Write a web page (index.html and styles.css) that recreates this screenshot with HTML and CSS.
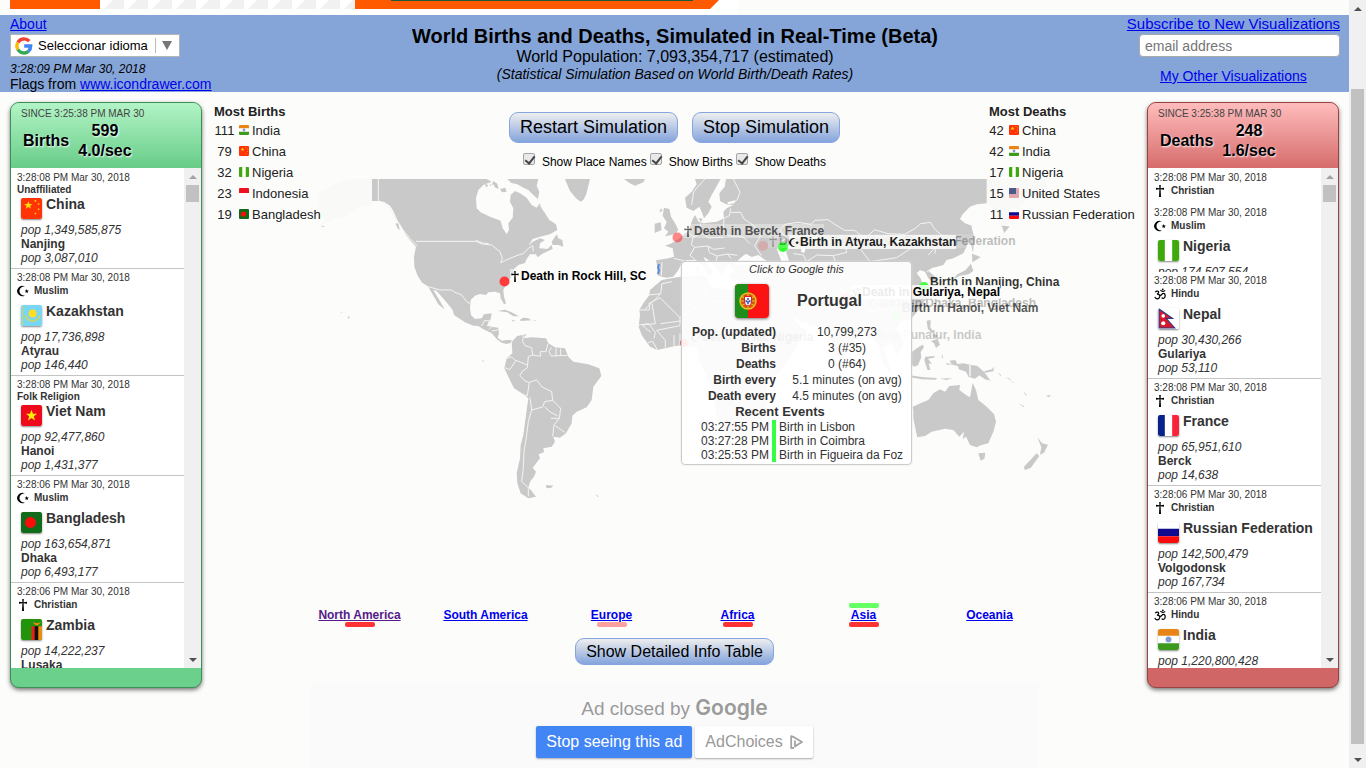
FILE: index.html
```html
<!DOCTYPE html>
<html lang="en">
<head>
<meta charset="utf-8">
<title>World Births and Deaths, Simulated in Real-Time (Beta)</title>
<link rel="stylesheet" href="styles.css">
</head>
<body>
<svg class="defs" aria-hidden="true">
  <symbol id="f-cn" viewBox="0 0 20 20" preserveAspectRatio="none"><path fill="#ff3306" d="M0 0h20v20H0z"/><path fill="#ffde00" d="M7 3l1.100 2.600 2.800.2-2.200 1.700.8 2.700L7 8.600l-2.500 1.600.8-2.700-2.200-1.700 2.800-.2zM13 2h1.500v1.500H13zM16 5h1.500v1.500H16zM16 10h1.500v1.500H16zM13 14h1.500v1.500H13z"/></symbol>
  <symbol id="f-in" viewBox="0 0 20 20" preserveAspectRatio="none"><path fill="#fff" d="M0 0h20v20H0z"/><path fill="#e98416" d="M0 0h20v6.500H0z"/><path fill="#3c9a1d" d="M0 13.500h20V20H0z"/><circle cx="10" cy="10" r="2.800" fill="#7f9bd1"/></symbol>
  <symbol id="f-ng" viewBox="0 0 20 20" preserveAspectRatio="none"><path fill="#fff" d="M0 0h20v20H0z"/><path fill="#3ea80d" d="M0 0h6.500v20H0zM13.500 0H20v20h-6.500z"/></symbol>
  <symbol id="f-id" viewBox="0 0 20 20" preserveAspectRatio="none"><path fill="#fff" d="M0 0h20v20H0z"/><path fill="#ee1122" d="M0 0h20v10H0z"/></symbol>
  <symbol id="f-bd" viewBox="0 0 20 20" preserveAspectRatio="none"><path fill="#126b1b" d="M0 0h20v20H0z"/><circle cx="9" cy="10" r="5.200" fill="#ff0b0b"/></symbol>
  <symbol id="f-us" viewBox="0 0 20 20" preserveAspectRatio="none"><path fill="#f3dada" d="M0 0h20v20H0z"/><path fill="#cc7780" d="M0 1h20v2H0zM0 5h20v2H0zM0 9h20v2H0zM0 13h20v2H0zM0 17h20v2H0z"/><path fill="#4c5b8e" d="M0 0h14v12H0z"/></symbol>
  <symbol id="f-ru" viewBox="0 0 20 20" preserveAspectRatio="none"><path fill="#fff" d="M0 0h20v20H0z"/><path fill="#0d0a8f" d="M0 6.500h20v7H0z"/><path fill="#fa0a0a" d="M0 13.500h20V20H0z"/></symbol>
  <symbol id="f-kz" viewBox="0 0 20 20" preserveAspectRatio="none"><path fill="#79d7f5" d="M0 0h20v20H0z"/><path fill="#c9d86a" d="M1 1h1v18H1z"/><circle cx="11" cy="8" r="3.800" fill="#ffdd22"/><path d="M4 10q2 5 7 5t7-5" fill="none" stroke="#d3d556" stroke-width="1.500"/></symbol>
  <symbol id="f-vn" viewBox="0 0 20 20" preserveAspectRatio="none"><path fill="#ee0a1b" d="M0 0h20v20H0z"/><path fill="#ffee00" d="M10 4.500l1.400 3.800h4l-3.200 2.500 1.200 3.900L10 12.400l-3.400 2.300 1.200-3.900-3.200-2.500h4z"/></symbol>
  <symbol id="f-zm" viewBox="0 0 20 20" preserveAspectRatio="none"><path fill="#23930b" d="M0 0h20v20H0z"/><path fill="#e5221a" d="M10 7h3.500v13H10z"/><path fill="#111" d="M13 7h4v13h-4z"/><path fill="#ee8b12" d="M16.500 7H20v13h-3.500zM11 3l4 1 4-1-3 3h-2z"/></symbol>
  <symbol id="f-np" viewBox="0 0 20 20" preserveAspectRatio="none"><path fill="#fff" d="M0 0h20v20H0z"/><path fill="#d5182c" stroke="#273a8c" d="M1 1l13 9H8l8 9H1z"/><circle cx="5" cy="7.500" r="1.700" fill="#fff"/><circle cx="5" cy="14.500" r="2" fill="#fff"/></symbol>
  <symbol id="f-fr" viewBox="0 0 20 20" preserveAspectRatio="none"><path fill="#fff" d="M0 0h20v20H0z"/><path fill="#08228c" d="M0 0h6.500v20H0z"/><path fill="#f9233a" d="M13.500 0H20v20h-6.500z"/></symbol>
  <symbol id="f-pt" viewBox="0 0 34 34"><path fill="#fb1212" d="M0 0h34v34H0z"/><path fill="#1f8d1a" d="M0 0h13v34H0z"/><circle cx="13" cy="17" r="8" fill="#d8551a" stroke="#e4c21c" stroke-width="1.500"/><path d="M5 17h16M13 9v16M6 12q7 5 14 0M6 22q7-5 14 0" stroke="#e4c21c" stroke-width="1.200" fill="none"/><path fill="#fff" stroke="#e02020" d="M9.500 12.500h7V18q0 3.500-3.500 4-3.500-.5-3.500-4z"/><path fill="#3451b5" d="M12.200 14h1.600v2h-1.600zM10.500 16.200h1.500v2h-1.500zM14 16.200h1.500v2H14zM12.200 16.800h1.600v3.400h-1.600z"/></symbol>
  <symbol id="cross" viewBox="0 0 10 12"><path d="M4.200 0h1.600l-.2 3.200 3.400-.4v1.900l-3.400-.4.4 7.700H4l.4-7.700-3.400.4V2.800l3.400.4z"/></symbol>
  <symbol id="moon" viewBox="0 0 12 12"><path d="M8 1.500A5.200 5.200 0 1 0 8 10.500 4.600 4.600 0 1 1 8 1.500zM9.700 4l.6 1.400 1.600.1-1.200 1 .4 1.500-1.400-.8-1.300.8.4-1.500-1.200-1 1.500-.1z"/></symbol>
  <symbol id="om" viewBox="0 0 12 12"><path d="M1.200 4.200Q2.500 2.600 4.200 3.200 5.600 4.600 3 6.200 6 6 5.800 8.600 5.200 11 3 10.800 1.200 10.300.8 8.800M5.400 7.200Q7 7.600 7.800 6.400 9.400 4.600 10.800 6 11.600 8 10.600 9.600 9.200 11 7.600 9.800M6.400 2.200Q8.600 4.600 11.200 2.400" fill="none" stroke="#000" stroke-width="1.200"/><circle cx="8.800" cy="1.300" r=".9"/></symbol>
</svg>

<div class="page">
  <div class="banner" aria-hidden="true">
    <svg width="738" height="15" viewBox="0 0 738 15">
      <defs><pattern id="slant" x="104" width="24" height="9" patternUnits="userSpaceOnUse"><path fill="#f1f1f1" d="M0 9l9-9h11v9z"/></pattern></defs>
      <path fill="#fff" d="M10 0h728v15H10z"/>
      <path fill="url(#slant)" d="M100 0h255v9H100z"/>
      <path fill="#ff5a00" d="M10 0h90v9H10zM355 0h364l-9 9H355z"/>
      <path fill="#1d5a3c" d="M391 0h302v1H391z"/>
    </svg>
  </div>

  <header class="header">
    <div class="head-left">
      <a href="#about">About</a>
      <button class="lang" type="button" aria-haspopup="listbox">
        <svg width="18" height="18" viewBox="0 0 18 18" fill="none" stroke-width="3.400"><path stroke="#ea4335" d="M2.900 5.500A7 7 0 0 1 14.200 4.200"/><path stroke="#fbbc05" d="M2.900 5.500a7 7 0 0 0 0 7"/><path stroke="#34a853" d="M2.900 12.500a7 7 0 0 0 10.700 1.800"/><path stroke="#4285f4" d="M9.200 9h6.500a7 7 0 0 1-2.300 5.300"/></svg>
        <span>Seleccionar idioma</span><i class="lang-arrow"></i>
      </button>
      <time class="clock">3:28:09 PM Mar 30, 2018</time>
      <p class="credit">Flags from <a href="#flags">www.icondrawer.com</a></p>
    </div>
    <div class="head-mid">
      <h1>World Births and Deaths, Simulated in Real-Time (Beta)</h1>
      <p>World Population: 7,093,354,717 (estimated)</p>
      <p class="note">(Statistical Simulation Based on World Birth/Death Rates)</p>
    </div>
    <form class="head-right">
      <label for="email"><a href="#subscribe">Subscribe to New Visualizations</a></label>
      <input id="email" type="email" placeholder="email address">
      <a class="other" href="#other">My Other Visualizations</a>
    </form>
  </header>

  <main class="main">
    <section class="panel births">
      <div class="panel-head">
        <p class="since">SINCE 3:25:38 PM MAR 30</p>
        <div class="totals"><h2>Births</h2><p>599<br>4.0/sec</p></div>
      </div>
      <div class="feed">
        <ul class="entries">
          <li><time>3:28:08 PM Mar 30, 2018</time><p class="rel">Unaffiliated</p><div class="country"><svg class="flag"><use href="#f-cn"/></svg><h3>China</h3></div><p class="pop">pop 1,349,585,875</p><p class="city">Nanjing</p><p class="pop">pop 3,087,010</p></li>
          <li><time>3:28:08 PM Mar 30, 2018</time><p class="rel iconed"><svg><use href="#moon"/></svg>Muslim</p><div class="country"><svg class="flag"><use href="#f-kz"/></svg><h3>Kazakhstan</h3></div><p class="pop">pop 17,736,898</p><p class="city">Atyrau</p><p class="pop">pop 146,440</p></li>
          <li><time>3:28:08 PM Mar 30, 2018</time><p class="rel">Folk Religion</p><div class="country"><svg class="flag"><use href="#f-vn"/></svg><h3>Viet Nam</h3></div><p class="pop">pop 92,477,860</p><p class="city">Hanoi</p><p class="pop">pop 1,431,377</p></li>
          <li><time>3:28:06 PM Mar 30, 2018</time><p class="rel iconed"><svg><use href="#moon"/></svg>Muslim</p><div class="country"><svg class="flag"><use href="#f-bd"/></svg><h3>Bangladesh</h3></div><p class="pop">pop 163,654,871</p><p class="city">Dhaka</p><p class="pop">pop 6,493,177</p></li>
          <li><time>3:28:06 PM Mar 30, 2018</time><p class="rel iconed"><svg><use href="#cross"/></svg>Christian</p><div class="country"><svg class="flag"><use href="#f-zm"/></svg><h3>Zambia</h3></div><p class="pop">pop 14,222,237</p><p class="city">Lusaka</p></li>
        </ul>
        <div class="scroll feed-scroll" aria-hidden="true"><i class="up dim"></i><i class="thumb"></i><i></i><i class="down"></i></div>
      </div>
    </section>

    <section class="center">
      <div class="top-list">
        <h2>Most Births</h2>
        <ol>
          <li><b>111</b><svg><use href="#f-in"/></svg>India</li>
          <li><b>79</b><svg><use href="#f-cn"/></svg>China</li>
          <li><b>32</b><svg><use href="#f-ng"/></svg>Nigeria</li>
          <li><b>23</b><svg><use href="#f-id"/></svg>Indonesia</li>
          <li><b>19</b><svg><use href="#f-bd"/></svg>Bangladesh</li>
        </ol>
      </div>
      <div class="controls">
        <div class="buttons"><button class="btn large" type="button">Restart Simulation</button><button class="btn large" type="button">Stop Simulation</button></div>
        <div class="checks">
          <label><input type="checkbox" checked>Show Place Names</label>
          <label><input type="checkbox" checked>Show Births</label>
          <label><input type="checkbox" checked>Show Deaths</label>
        </div>
      </div>
      <div class="top-list right">
        <h2>Most Deaths</h2>
        <ol>
          <li><b>42</b><svg><use href="#f-cn"/></svg>China</li>
          <li><b>42</b><svg><use href="#f-in"/></svg>India</li>
          <li><b>17</b><svg><use href="#f-ng"/></svg>Nigeria</li>
          <li><b>15</b><svg><use href="#f-us"/></svg>United States</li>
          <li><b>11</b><svg><use href="#f-ru"/></svg>Russian Federation</li>
        </ol>
      </div>

      <div class="map">
        <svg class="world" viewBox="294 179 761 424">
          <g fill="#f9f9f8">
            <path d="M318 192l18-8 12-5h24v26l-14 2-12 8-16 6-12 6 8-8-10-6 4-10z"/>
            <path d="M987 179h60v12l-20 8-14 14-10 22-4-14-6-14-6-4z"/>
          </g>
          <g transform="translate(310 175) scale(.33333)" fill="#c9c9c9">
            <path d="M186 12H530L545 20 520 30 505 45 498 70 500 100 512 112 540 125 560 133 572 137 578 160 590 177 597 165 595 145 608 128 610 100 600 80 602 60 615 48 630 55 650 68 665 90 680 98 690 85 692 95 705 115 718 135 738 148 742 165 720 178 690 185 668 192 655 212 668 200 690 190 705 195 690 205 688 220 712 222 725 210 728 222 700 235 682 247 678 238 660 238 650 252 645 264 625 270 612 282 612 295 600 312 588 330 580 345 582 365 588 385 582 388 572 370 570 355 555 350 535 352 528 360 510 357 495 362 482 375 480 400 483 420 495 432 515 430 522 418 545 415 542 432 535 445 530 452 545 455 565 458 567 475 563 488 575 497 590 495 605 495 604 503 590 507 575 503 560 492 545 475 520 463 505 453 490 452 465 442 432 420 428 405 412 385 395 365 380 348 370 345 385 370 400 395 403 403 385 388 372 365 362 348 355 335 335 322 322 300 313 275 312 245 318 215 300 195 288 180 275 155 262 135 250 108 240 92 222 80 205 78H186Z"/>
            <path d="M592 12H685L680 32 688 50 684 72 670 60 655 45 640 38 622 28 604 24ZM536 22l8 10 6-14 12 8 4 16-10-4-6-10-8 6zM570 42l16-4 4 12-14 2zM525 26l10 4-6 8zM725 200L740 178 745 190 757 195 760 215 745 210 728 210ZM765 12H840L832 45 828 60 820 75 812 80 798 70 780 48 770 25ZM942 12H1005L1000 22 975 32 958 24ZM563 408L585 404 605 412 627 424 610 424 592 412ZM630 434L640 428 655 430 664 436 632 438ZM604 434l14 4-10 1zM672 436l8 1-8 2zM256 146l8 16 5 2-4-20zM708 930l22 2-6 6-14 2zM112 424l8 2-4 6zM90 412l8 1-2 2zM516 556l6 1-3 4zM36 152l10 2-12 3zM856 958l10 6-3 2z"/>
            <path d="M605 500L622 483 650 478 640 490 665 487 708 490 715 505 735 517 765 520 775 545 790 560 835 568 868 580 874 603 850 635 845 675 830 697 800 710 787 722 785 745 768 775 750 788 730 785 735 800 725 815 700 820 702 832 686 838 690 850 682 860 668 878 678 890 672 905 660 920 655 938 663 945 678 965 655 970 632 955 622 925 620 895 630 850 632 810 640 780 648 720 655 670 640 658 612 640 595 605 583 580 590 550 607 535Z"/>
            <path d="M1062 98L1078 102 1083 125 1097 148 1105 165 1095 178 1065 184 1075 170 1062 160 1070 142 1058 122ZM1034 146L1052 142 1055 165 1034 174ZM1052 100l6 6-4 4z"/>
          </g>
          <g transform="translate(310 175) scale(.33333)" class="borders">
            <path d="M205 12V77L222 86 240 100 262 140 275 160 300 190 322 213M318 199H498L515 207 545 210 570 230 577 250 572 263 600 250 625 240 640 236 655 220 668 212 670 230M498 196l20 8 18 2M355 335L390 345 425 345 435 352 455 360 470 380 480 385M515 453l8-16h14v10l8 8-8 8M545 468l22-4M604 503l4-8M640 480L638 500 645 512 665 518 668 540 655 545 652 578 636 590 630 602 645 618 658 622 652 662 640 660M585 578l14 6 18-26-12-12-15 4M618 556l34 14M668 540l24 4-2-14 18 0 6-24M725 517l-8 12 6 14 50-2M738 518v26M752 520v22M658 622L680 615 695 635 725 650 728 676 752 700 748 730 722 730M728 676L704 680 698 696 665 705 660 668M704 696l18 16 20 10M748 730l-16 20-4 34M735 752l30 20M665 705L655 740 650 780 642 830 640 880 635 920 655 938M655 940v24"/>
          </g>
          <g transform="translate(600 175) scale(.33333)" fill="#c9c9c9">
            <path d="M260 98L255 68 275 50 290 28 285 12H362L352 30 335 60 325 80 335 95 325 115 312 130 305 110 298 95 280 108Z"/>
            <path d="M378 12H1160V85L1130 88 1110 95 1088 118 1080 132 1095 145 1115 152 1117 175 1105 205 1090 235 1060 250 1040 255 1030 270 1000 278 985 288 1000 300 1012 315 1002 325 985 310 975 290 960 285 950 295 962 310 970 335 980 370 960 400 935 430 900 440 890 460 905 480 910 510 890 540 870 500 850 520 865 560 875 600 850 570 835 510 800 470 770 490 740 520 725 570 705 520 680 460 640 450 600 440 575 420 600 455 620 465 590 510 540 530 500 460 470 400 455 370 450 330 400 320 385 300 400 285 385 265 375 285 362 300 350 280 325 255 310 245 318 262 342 290 325 302 312 278 288 255 260 255 245 265 235 285 220 305 200 308 185 305 172 300 173 280 168 256 205 250 222 245 218 220 195 212 215 205 235 192 262 170 270 155 278 132 285 120 296 140 310 145 350 140 372 130 370 110 380 100 400 90 378 88 360 78 358 55 374 35Z"/>
            <path d="M150 345L185 315 240 305 300 300 325 310 330 335 380 345 440 345 460 370 490 430 530 480 560 490 600 480 590 520 540 590 500 620 505 680 480 760 430 800 380 790 350 720 340 650 300 560 290 520 250 510 222 514 172 525 150 515 125 480 116 455 120 420 118 405 130 385 148 360Z"/>
            <path d="M1114 155L1124 190 1119 232 1111 200ZM1116 236L1142 246 1130 254 1117 262ZM1113 266L1120 288 1106 298 1080 302 1060 312 1072 298 1096 286ZM1205 152l24 2-16 20zM290 270l7 2-1 22-6-2zM296 128l12 4-6 10zM186 100l-8 8 4 4z"/>
          </g>
          <g transform="translate(600 175) scale(.33333)">
            <path fill="#fcfcfa" d="M405 268L420 250 438 236 455 246 475 240 500 258 505 272 470 266 430 274ZM530 222L552 208 572 214 558 230 568 260 572 284 552 284 542 252ZM382 82l24-6-2 8-20 4zM605 216l12 4-4 14-10-4z"/>
            <g class="borders">
              <path d="M275 90l6-40 26-30 8-8M378 12l-12 10M400 12l20 40-8 22-12 10M372 130l16-8 4-22M392 112h30l10 20 30 20 20 30-18 30 20 30M372 130l-2 30 14 22 46 4 20 20M300 145l6 30 20 14 44-2M306 175l-26 10-16-12M280 185l-6 24 10 8 40-4 16 10 34-4M284 217l-14 24 16 14M324 213l4 20 24 10 30-6 12 14M352 243l-6 24 16 8M382 237l30 4M186 262l-2 40M222 250l32 8M560 190l-20-24 14-18 40-6 40 6 10-12 40-2 30 20 20 12 30 0 24 20M560 190l-22 12M760 190l-24 18 4 24-40 10-50-2-30 20-10-20-30-4M540 230l40 50M600 262l24 20 60 4 20-24M700 242l10 30M760 200l40-14 24-22 40 12 50 2 32-18 16-14 30-4 10 18 24 22-16 30-6 24M764 200l46 60 80-12 40-26-8-20-50-20M985 240l20-22 12-10M650 330l40-20 60 60 60 40 70-10M460 270l40 30 20 60M400 320l60-6M1000 278l-20 12"/>
              <path d="M148 360l34-4 4-30 30-6M182 356l-48 48M118 405h30v-20M146 386l34-18 60 60 60-40M156 386l10 60-40 4 26 22M182 446l60-8M240 428v24l-70 14 26 30M116 450l30-4 20 26-4 18M172 525l-14-26-14 4M196 496v22M222 480v34M240 476v34M325 310l-14 30 20 40 80 0M411 345v80"/>
            </g>
          </g>
          <g transform="translate(860 260) scale(.33333)" fill="#c9c9c9">
            <path d="M200 182L212 180 211 202 220 215 214 220 203 205ZM213 244L232 236 240 254 228 264 222 250ZM222 222l10 4-4 10-8-8zM150 280L175 262 188 254 192 262 182 276 184 292 174 316 162 320 150 308ZM193 300L196 290 225 288 222 293 204 296 216 312 206 310 211 330 203 330 197 314ZM246 282l4 14-5-4zM150 346L190 352 232 354 226 359 185 358 150 352ZM240 356l36-2-16 6zM256 310l30 2-24 2zM268 302L286 300 292 312 310 310 330 314 352 318 372 335 384 352 392 362 375 358 358 346 345 356 325 350 318 335 296 328 294 318 278 314ZM372 334l24-6 6-8-2 14-24 4zM412 336l12 10-2 2zM436 350l16 8-2 2zM448 360l14 8-2 1zM474 428l20 12-4 1zM490 392l10 14-3 1zM558 408l16-4-8 8z"/>
            <path d="M160 452L158 440 185 428 205 420 220 400 240 388 255 395 268 378 300 375 298 390 318 405 330 412 338 368 348 390 355 420 380 440 402 462 408 485 400 515 385 550 362 556 350 562 330 555 318 530 308 538 312 515 298 530 280 510 255 506 215 515 195 528 172 532 168 515 160 475ZM355 580L376 578 373 596 362 602ZM532 532L546 550 564 554 552 578 540 584 544 562ZM530 580L538 588 512 624 494 630 492 620Z"/>
            <path d="M330 315v34" fill="none" stroke="#fcfcfa" stroke-width="4"/>
          </g>
          <path fill="none" stroke="#5b8de0" stroke-width="2" d="M659 264l-1 4 1 2-1 4"/>
          <g fill="#ff3b3b"><circle cx="504.500" cy="281.500" r="5"/><circle cx="677.500" cy="237.500" r="5" opacity=".6"/><circle cx="763" cy="246" r="5" opacity=".2"/><circle cx="684" cy="343" r="4"/><circle cx="846" cy="298" r="5" opacity=".6"/></g>
          <g fill="#4f4"><circle cx="783" cy="247" r="5" fill="#3f3"/><circle cx="924" cy="287" r="5"/><circle cx="896" cy="314" r="5" opacity=".8"/></g>
        </svg>
        <p class="tag rock"><svg><use href="#cross"/></svg>Death in Rock Hill, SC</p>
        <p class="tag volgo"><svg><use href="#cross"/></svg>Death in Volgodonsk, Russian Federation</p>
        <p class="tag berck"><svg><use href="#cross"/></svg>Death in Berck, France</p>
        <p class="tag atyrau"><svg><use href="#moon"/></svg>Birth in Atyrau, Kazakhstan</p>
        <p class="tag nanjing"><svg></svg>Birth in Nanjing, China</p>
        <p class="tag dhaka"><svg><use href="#moon"/></svg>Birth in Dhaka, Bangladesh</p>
        <p class="tag hanoi">Birth in Hanoi, Viet Nam</p>
        <p class="tag gulariya"><svg><use href="#om"/></svg>Death in Gulariya, Nepal</p>
        <p class="tag punalur">Death in Punalur, India</p>
        <p class="tag ila"><svg><use href="#moon"/></svg>Death in Ila, Nigeria</p>

        <div class="tip">
          <p class="tip-hint">Click to Google this</p>
          <div class="tip-title"><svg><use href="#f-pt"/></svg><h3>Portugal</h3></div>
          <table class="facts">
            <tr><th scope="row">Pop. (updated)</th><td>10,799,273</td></tr>
            <tr><th scope="row">Births</th><td>3 (#35)</td></tr>
            <tr><th scope="row">Deaths</th><td>0 (#64)</td></tr>
            <tr><th scope="row">Birth every</th><td>5.1 minutes (on avg)</td></tr>
            <tr><th scope="row">Death every</th><td>4.5 minutes (on avg)</td></tr>
          </table>
          <h4>Recent Events</h4>
          <table class="events">
            <tr><td>03:27:55 PM</td><td>Birth in Lisbon</td></tr>
            <tr><td>03:27:28 PM</td><td>Birth in Coimbra</td></tr>
            <tr><td>03:25:53 PM</td><td>Birth in Figueira da Foz</td></tr>
          </table>
        </div>
      </div>

      <nav class="regions">
        <div><i></i><a class="visited" href="#na">North America</a><i class="death"></i></div>
        <div><i></i><a href="#sa">South America</a><i></i></div>
        <div><i></i><a href="#eu">Europe</a><i class="death faded"></i></div>
        <div><i></i><a href="#af">Africa</a><i class="death"></i></div>
        <div><i class="birth"></i><a href="#as">Asia</a><i class="death"></i></div>
        <div><i></i><a href="#oc">Oceania</a><i></i></div>
      </nav>
      <button class="btn info" type="button">Show Detailed Info Table</button>
      <aside class="ad">
        <p>Ad closed by <strong>Google</strong></p>
        <div>
          <button class="stop" type="button">Stop seeing this ad</button>
          <button class="choices" type="button">AdChoices <svg width="13" height="14" viewBox="0 0 13 14" fill="none" stroke="#a3a3a3" stroke-width="1.800" stroke-linejoin="round"><path d="M4 13H1.200V1.200L4 2.200 12 7 7 10M5 5.500v6L8 9.500"/></svg></button>
        </div>
      </aside>
    </section>

    <section class="panel deaths">
      <div class="panel-head">
        <p class="since">SINCE 3:25:38 PM MAR 30</p>
        <div class="totals"><h2>Deaths</h2><p>248<br>1.6/sec</p></div>
      </div>
      <div class="feed">
        <ul class="entries">
          <li class="opening"><time>3:28:08 PM Mar 30, 2018</time><p class="rel iconed"><svg><use href="#cross"/></svg>Christian</p></li>
          <li class="opening half"><time>3:28:08 PM Mar 30, 2018</time><p class="rel iconed"><svg><use href="#moon"/></svg>Muslim</p><div class="country"><svg class="flag"><use href="#f-ng"/></svg><h3>Nigeria</h3></div><p class="pop">pop 174,507,554</p></li>
          <li><time>3:28:08 PM Mar 30, 2018</time><p class="rel iconed"><svg><use href="#om"/></svg>Hindu</p><div class="country"><svg class="flag"><use href="#f-np"/></svg><h3>Nepal</h3></div><p class="pop">pop 30,430,266</p><p class="city">Gulariya</p><p class="pop">pop 53,110</p></li>
          <li><time>3:28:08 PM Mar 30, 2018</time><p class="rel iconed"><svg><use href="#cross"/></svg>Christian</p><div class="country"><svg class="flag"><use href="#f-fr"/></svg><h3>France</h3></div><p class="pop">pop 65,951,610</p><p class="city">Berck</p><p class="pop">pop 14,638</p></li>
          <li><time>3:28:06 PM Mar 30, 2018</time><p class="rel iconed"><svg><use href="#cross"/></svg>Christian</p><div class="country"><svg class="flag"><use href="#f-ru"/></svg><h3>Russian Federation</h3></div><p class="pop">pop 142,500,479</p><p class="city">Volgodonsk</p><p class="pop">pop 167,734</p></li>
          <li><time>3:28:06 PM Mar 30, 2018</time><p class="rel iconed"><svg><use href="#om"/></svg>Hindu</p><div class="country"><svg class="flag"><use href="#f-in"/></svg><h3>India</h3></div><p class="pop">pop 1,220,800,428</p></li>
        </ul>
        <div class="scroll feed-scroll" aria-hidden="true"><i class="up dim"></i><i class="thumb"></i><i></i><i class="down"></i></div>
      </div>
    </section>
  </main>
</div>
<div class="scroll page-scroll" aria-hidden="true"><i class="up"></i><i></i><i class="thumb"></i><i></i><i class="down"></i></div>
</body>
</html>
```
FILE: styles.css
```css
* { box-sizing: border-box; margin: 0; padding: 0; }
body { display: flex; height: 100vh; overflow: hidden; background: #fcfcfa; color: #222; font: 12px/14px "Liberation Sans", Arial, sans-serif; }
button, input { font-family: inherit; }
a { color: #00e; }
ul, ol { list-style: none; }
table { border-spacing: 0; }
.defs { position: absolute; width: 0; height: 0; }
.page { flex: 1; min-width: 0; }
.banner { height: 15px; }
.banner svg { display: block; }

/* Header */
.header { display: grid; grid-template-columns: 1fr auto 1fr; padding: 0 9px 0 10px; height: 77px; background: #85a5d9; color: #000; font-size: 14px; line-height: 18px; }
.head-left { display: flex; flex-direction: column; align-items: flex-start; }
.lang { display: flex; align-items: center; gap: 5px; width: 170px; height: 23px; margin: 1px 0 4px; padding: 0 4px; border: 1px solid #b5b5b5; background: #fff; color: #000; font-size: 13px; white-space: nowrap; }
.lang svg { flex: none; }
.lang-arrow { flex: none; height: 15px; margin-left: 2px; padding-left: 6px; border-left: 1px solid #bbb; }
.lang-arrow::after { content: ""; display: block; margin-top: 3px; border: 5px solid transparent; border-top: 9px solid #767676; border-bottom: 0; }
.clock { font-size: 12px; font-style: italic; line-height: 16px; }
.credit { line-height: 15px; }
.head-mid { padding-top: 9px; text-align: center; font-size: 16px; }
.head-mid h1 { font-size: 20px; line-height: 24px; }
.head-mid .note { font-size: 14px; font-style: italic; line-height: 16px; }
.head-right { display: flex; flex-direction: column; align-items: flex-end; justify-self: end; }
.head-right label { font-size: 15px; }
.head-right input { width: 201px; height: 23px; margin: 1px 0 10px; padding: 0 5px; border: 1px solid #aaa; border-radius: 4px; background: #fff; font-size: 14px; }
.head-right .other { align-self: center; }

/* Side panels */
.main { display: grid; grid-template-columns: 192px 1fr 192px; align-items: start; padding: 0 10px; }
.panel { margin-top: 10px; padding-bottom: 19px; border: 1px solid #3d8f58; border-radius: 9px; background: #6bd08b; box-shadow: 0 2px 4px #777; }
.deaths { border-color: #9a4242; background: #d06666; }
.panel-head { height: 65px; padding: 3px 10px 0; border-radius: 8px 8px 0 0; background: linear-gradient(#b2f4c6, #68cc88); }
.deaths .panel-head { background: linear-gradient(#ffbcbc, #d66c6c); }
.since { font-size: 10px; line-height: 15px; color: #444; }
.totals { display: flex; align-items: center; gap: 9px; padding-left: 2px; color: #000; font-size: 16px; font-weight: bold; line-height: 20px; text-shadow: 1px 1px 2px #fff; text-align: center; }
.totals h2 { font-size: 16px; }
.feed { display: flex; height: 500px; background: #fff; overflow: hidden; }
.entries { flex: 1; padding-top: 1px; color: #333; white-space: nowrap; }
.entries li { padding: 3px 0 3px 6px; border-bottom: 1px solid #c4c4c4; }
.entries time { display: block; font-size: 10px; line-height: 12px; color: #333; }
.rel { height: 11px; font-size: 10px; font-weight: bold; line-height: 11px; }
.rel.iconed { display: flex; align-items: flex-start; gap: 5px; height: 18px; line-height: 14px; }
.rel svg { width: 12px; height: 12px; margin-top: 1px; }
.country { display: flex; align-items: flex-start; gap: 4px; height: 28px; padding: 1px 0 0 4px; }
.country h3 { font-size: 14px; line-height: 16px; }
.flag { width: 21px; height: 21px; margin-top: 2px; border-radius: 2px; box-shadow: 0 1px 2px #888; }
.pop, .city { padding-left: 4px; }
.pop { font-style: italic; }
.city { font-weight: bold; }
.entries .opening { height: 35px; padding-bottom: 0; border: 0; overflow: hidden; }
.entries .half { height: 68px; }

/* Scroll bars */
.scroll { display: grid; width: 17px; background: #f0f0f0; }
.feed-scroll { grid-template-rows: 17px 17px 1fr 17px; }
.page-scroll { grid-template-rows: 17px 72fr 655fr 7fr 17px; }
.thumb { margin: 0 2px; background: #c1c1c1; }
.up, .down { place-self: center; border: 4px solid transparent; }
.up { border-top: 0; border-bottom-color: #505050; }
.up.dim { border-bottom-color: #a3a3a3; }
.down { border-bottom: 0; border-top-color: #505050; }

/* Center column */
.center { display: grid; grid-template-columns: auto 1fr auto; grid-template-rows: 87px auto; justify-items: center; }
.top-list { grid-area: 1 / 1 / 3 / 2; z-index: 1; align-self: start; width: 130px; margin: 11px 0 0 12px; font-size: 13px; white-space: nowrap; }
.top-list.right { grid-area: 1 / 3 / 3 / 4; width: 158px; }
.top-list h2 { font-size: 13px; line-height: 17px; }
.top-list li { display: flex; align-items: center; height: 21px; }
.top-list b { width: 22px; padding-right: 1px; font-weight: normal; text-align: center; }
.top-list.right b { width: 16px; }
.top-list li svg { width: 10px; height: 10px; margin: 0 3px 2px; border-radius: 1px; }
.top-list.right li svg { margin-left: 4px; }
.controls { grid-area: 1 / 1 / 2 / -1; display: flex; flex-direction: column; align-items: center; gap: 10px; padding-top: 20px; }
.buttons { display: flex; gap: 14px; }
.btn { padding: 0 10px; border: 1px solid #85a5e0; border-radius: 9px; background: linear-gradient(#eee, #84a4dc); color: #000; }
.btn.large { height: 31px; font-size: 18px; }
.checks { display: flex; gap: 3px; color: #000; line-height: 18px; }
.checks label { display: flex; align-items: flex-start; }
.checks input { width: 12px; height: 12px; margin: 0 7px 0 0; appearance: none; border: 1px solid #a5a5a5; border-radius: 2px; background: #e9e9e9; }
.checks input:checked::before { content: ""; display: block; width: 4px; height: 8px; margin-left: 3px; border: solid #444; border-width: 0 2px 2px 0; transform: rotate(38deg); }
.map { grid-area: 2 / 1 / 3 / -1; position: relative; width: 761px; height: 424px; }
.world { display: block; }
.borders { fill: none; stroke: #f4f4f3; stroke-width: 3; stroke-linejoin: round; }

/* Event labels on the map */
.tag { position: absolute; display: flex; align-items: center; gap: 1px; height: 14px; background: rgba(252, 252, 250, .6); color: #000; font-weight: bold; white-space: nowrap; }
.tag svg { width: 10px; height: 11px; }
.rock { left: 216px; top: 90px; }
.volgo { left: 474px; top: 55px; opacity: .25; }
.berck { left: 389px; top: 45px; opacity: .6; }
.atyrau { left: 495px; top: 56px; opacity: .85; background: #fcfcfa; }
.nanjing { left: 625px; top: 96px; opacity: .8; background: none; }
.gulariya { left: 557px; top: 106px; background: rgba(252, 252, 250, .85); }
.dhaka { left: 575px; top: 117px; opacity: .25; }
.hanoi { left: 608px; top: 122px; opacity: .65; background: none; }
.punalur { left: 558px; top: 149px; opacity: .2; background: none; }
.ila { left: 397px; top: 151px; opacity: .6; background: none; }

/* Country card */
.tip { position: absolute; left: 387px; top: 82px; width: 231px; height: 204px; border: 1px solid #ccc; border-radius: 4px; background: rgba(255, 255, 255, .92); box-shadow: 0 0 2px #ddd; color: #333; }
.tip-hint { font-size: 11px; font-style: italic; line-height: 15px; text-align: center; }
.tip-title { display: flex; align-items: center; gap: 28px; height: 47px; padding-left: 53px; }
.tip-title svg { width: 34px; height: 34px; border-radius: 4px; box-shadow: 0 1px 3px #777; }
.tip-title h3 { font-size: 16px; }
.facts { width: 100%; line-height: 16px; }
.facts th { width: 94px; text-align: right; }
.facts td { padding: 0 9px 0 16px; text-align: center; white-space: nowrap; }
.tip h4 { padding-right: 33px; font-size: 13px; line-height: 16px; text-align: center; }
.events td:first-child { width: 94px; padding-right: 3px; border-right: 4px solid #3f4; text-align: right; }
.events td:last-child { padding-left: 3px; white-space: nowrap; }

/* Below the map */
.regions { grid-column: 1 / -1; display: grid; grid-template-columns: repeat(6, 126px); font-weight: bold; }
.regions div { display: flex; flex-direction: column; align-items: center; }
.regions i { width: 30px; height: 5px; border-radius: 2px; }
.regions .death { background: #f33; }
.regions .faded { opacity: .45; }
.regions .birth { background: #6f6; }
.visited { color: #551a8b; }
.info { grid-column: 1 / -1; height: 27px; margin-top: 11px; font-size: 16px; }
.ad { grid-column: 1 / -1; width: 728px; margin-top: 18px; padding: 12px 0 10px; background: #fafafa; color: #9a9a9a; text-align: center; }
.ad p { margin-bottom: 5px; font-size: 19px; line-height: 25px; }
.ad strong { font: 600 21px/25px Inter, "Liberation Sans", sans-serif; }
.ad div { display: flex; justify-content: center; gap: 3px; }
.ad button { height: 32px; padding: 0 10px; border: 0; border-radius: 2px; font-size: 16px; box-shadow: 0 1px 2px #aaa; }
.ad .stop { background: #4285f4; color: #fff; }
.ad .choices { display: flex; align-items: center; gap: 7px; background: #fff; color: #999; }
```
